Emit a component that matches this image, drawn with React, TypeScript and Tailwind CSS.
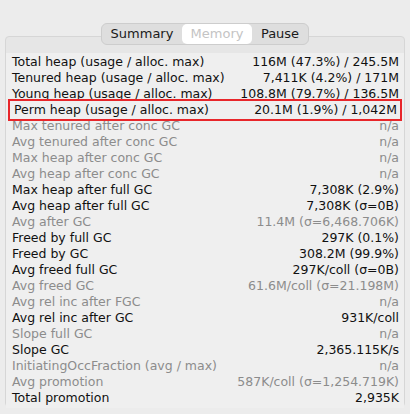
const rows: { label: string; value: string; dim?: boolean; mark?: boolean }[] = [
  { label: 'Total heap (usage / alloc. max)', value: '116M (47.3%) / 245.5M' },
  { label: 'Tenured heap (usage / alloc. max)', value: '7,411K (4.2%) / 171M' },
  { label: 'Young heap (usage / alloc. max)', value: '108.8M (79.7%) / 136.5M' },
  { label: 'Perm heap (usage / alloc. max)', value: '20.1M (1.9%) / 1,042M', mark: true },
  { label: 'Max tenured after conc GC', value: 'n/a', dim: true },
  { label: 'Avg tenured after conc GC', value: 'n/a', dim: true },
  { label: 'Max heap after conc GC', value: 'n/a', dim: true },
  { label: 'Avg heap after conc GC', value: 'n/a', dim: true },
  { label: 'Max heap after full GC', value: '7,308K (2.9%)' },
  { label: 'Avg heap after full GC', value: '7,308K (σ=0B)' },
  { label: 'Avg after GC', value: '11.4M (σ=6,468.706K)', dim: true },
  { label: 'Freed by full GC', value: '297K (0.1%)' },
  { label: 'Freed by GC', value: '308.2M (99.9%)' },
  { label: 'Avg freed full GC', value: '297K/coll (σ=0B)' },
  { label: 'Avg freed GC', value: '61.6M/coll (σ=21.198M)', dim: true },
  { label: 'Avg rel inc after FGC', value: 'n/a', dim: true },
  { label: 'Avg rel inc after GC', value: '931K/coll' },
  { label: 'Slope full GC', value: 'n/a', dim: true },
  { label: 'Slope GC', value: '2,365.115K/s' },
  { label: 'InitiatingOccFraction (avg / max)', value: 'n/a', dim: true },
  { label: 'Avg promotion', value: '587K/coll (σ=1,254.719K)', dim: true },
  { label: 'Total promotion', value: '2,935K' },
];

export default function App() {
  return (
    <div
      className="w-[410px] h-[414px] bg-[#ececec] overflow-hidden text-[12.5px] leading-[16px]"
      style={{ fontFamily: '"DejaVu Sans", Verdana, sans-serif' }}
    >
      {/* Segmented tabs */}
      <div className="relative z-10 flex justify-center pt-[23px]">
        <div className="flex h-[22px] rounded-[6px] border border-[#cdcdcd] bg-[#dedede] text-[13px] leading-[20px]">
          <div className="w-[80px] text-center text-[#1a1a1a]">Summary</div>
          <div className="w-[70px] rounded-[5px] bg-white text-center text-[#c4c4c4]">Memory</div>
          <div className="w-[56px] text-center text-[#1a1a1a]">Pause</div>
        </div>
      </div>

      {/* Panel */}
      <div className="mx-[5px] -mt-[9px] h-[371px] rounded-[4px] border border-[#d6d6d6] bg-[#e6e6e6] pt-[16px]">
        <div className="bg-[#efefef] pt-[1px] pb-[2px]">
          {rows.map((r) => (
            <div
              key={r.label}
              className={
                r.mark
                  ? 'mx-[2px] flex h-[16px] items-center justify-between border-2 border-[#e8262a] pl-[4px] pr-[3px] -my-[3px] h-[22px] relative'
                  : 'flex h-[16px] items-center justify-between pl-[6px] pr-[5px]'
              }
            >
              <span className={`whitespace-nowrap ${r.dim ? 'text-[#8c8c8c]' : 'text-[#111]'}`}>{r.label}</span>
              <span className={`whitespace-nowrap ${r.dim ? 'text-[#8c8c8c]' : 'text-[#111]'}`}>{r.value}</span>
            </div>
          ))}
        </div>
      </div>
    </div>
  );
}
